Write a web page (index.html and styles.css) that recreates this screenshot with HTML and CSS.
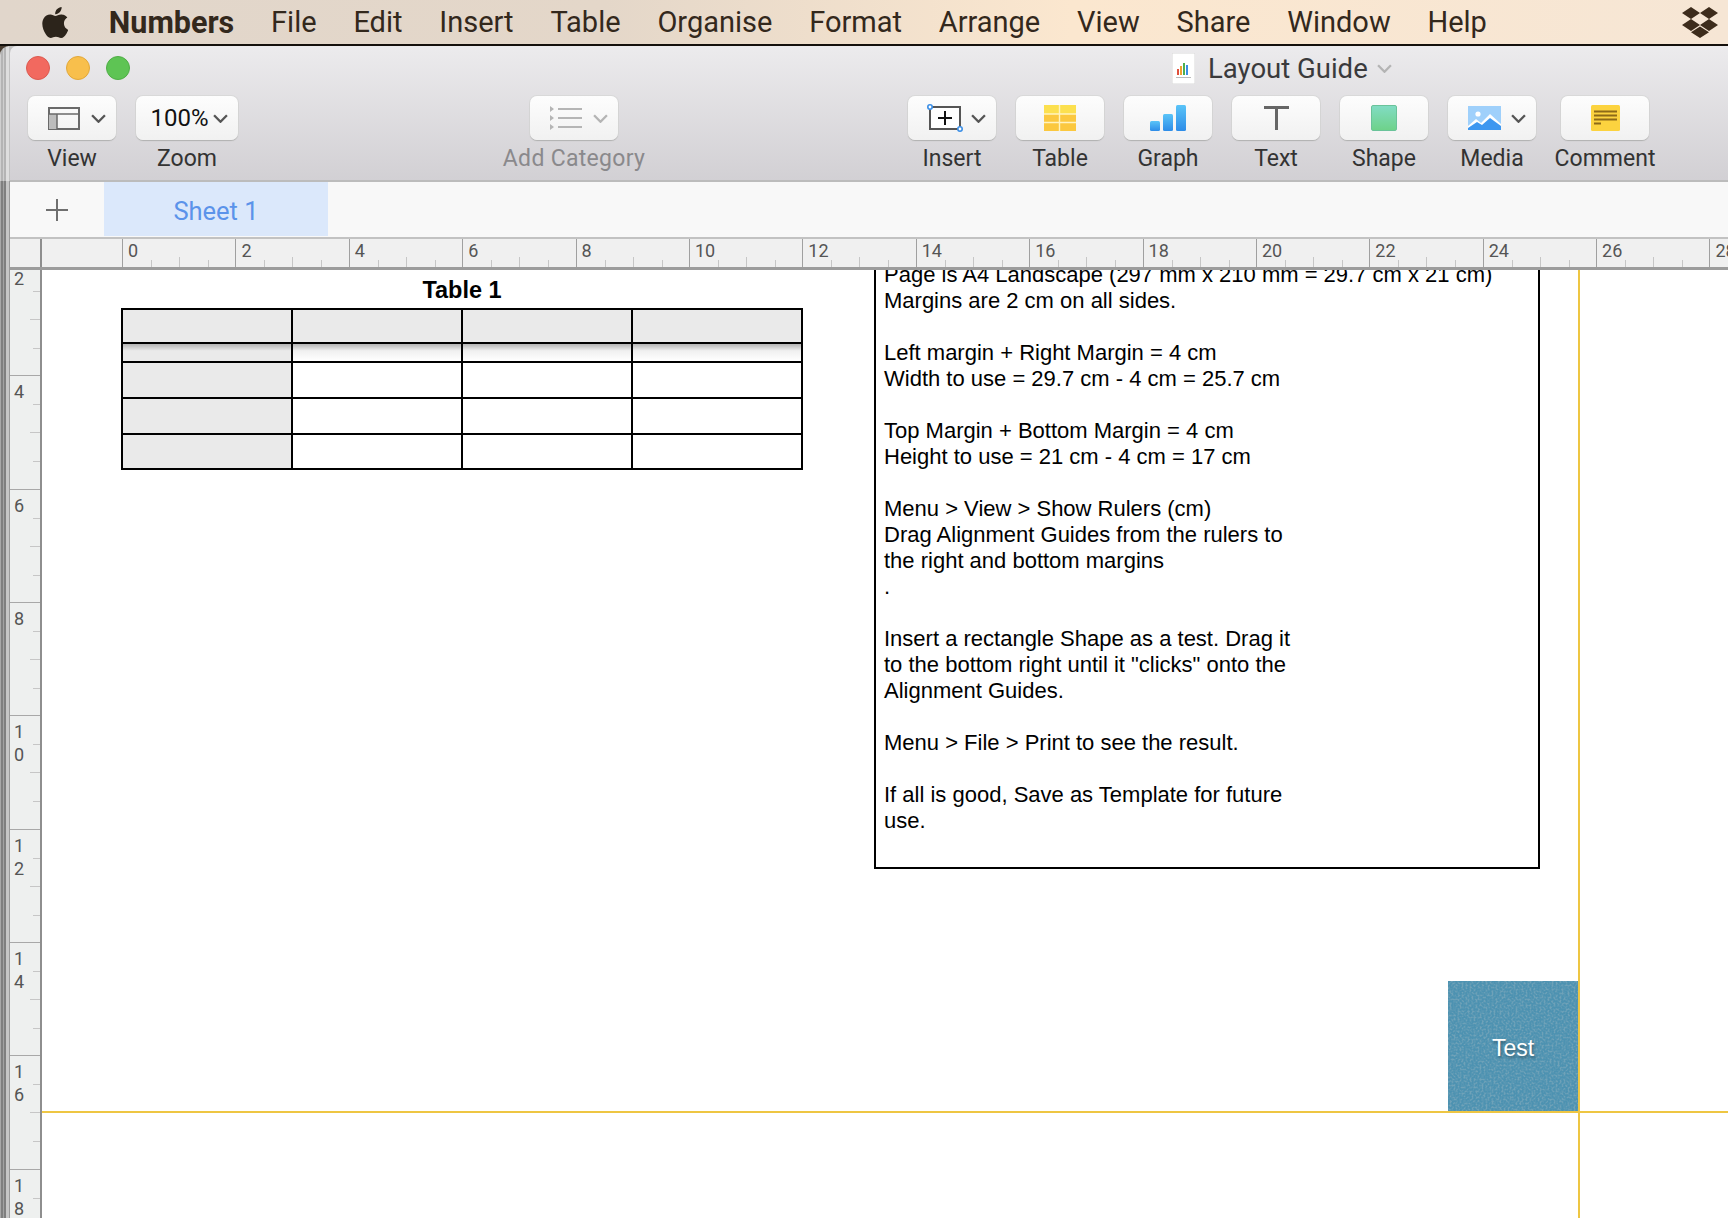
FILE: index.html
```html
<!DOCTYPE html>
<html lang="en">
<head>
    <meta charset="UTF-8">
    <title>Numbers - Layout Guide</title>
    <link rel="stylesheet" href="styles.css">
</head>
<body>

    <!-- Menu Bar -->
    <header class="menubar">
        <svg class="apple-logo" viewBox="2 0 19.6 24" preserveAspectRatio="none"><path d="M12.152 6.896c-.948 0-2.415-1.078-3.96-1.04-2.04.027-3.91 1.183-4.961 3.014-2.117 3.675-.546 9.103 1.519 12.09 1.013 1.454 2.208 3.09 3.792 3.039 1.52-.065 2.09-.987 3.935-.987 1.831 0 2.35.987 3.96.948 1.637-.026 2.676-1.48 3.676-2.948 1.156-1.688 1.636-3.325 1.662-3.415-.039-.013-3.182-1.221-3.22-4.857-.026-3.04 2.48-4.494 2.597-4.559-1.429-2.09-3.623-2.324-4.39-2.376-2-.156-3.675 1.09-4.61 1.09zM15.53 3.83c.843-1.012 1.4-2.427 1.245-3.83-1.207.052-2.662.805-3.532 1.818-.78.896-1.454 2.338-1.273 3.714 1.338.104 2.715-.688 3.559-1.701"/></svg>
        <span class="menu-item app-name">Numbers</span>
        <span class="menu-item">File</span>
        <span class="menu-item">Edit</span>
        <span class="menu-item">Insert</span>
        <span class="menu-item">Table</span>
        <span class="menu-item">Organise</span>
        <span class="menu-item">Format</span>
        <span class="menu-item">Arrange</span>
        <span class="menu-item">View</span>
        <span class="menu-item">Share</span>
        <span class="menu-item">Window</span>
        <span class="menu-item">Help</span>
        <svg class="dropbox-logo" viewBox="0 0 36 31"><path d="M9 0l9 6-9 6-9-6zM27 0l9 6-9 6-9-6zM9 12l9 6-9 6-9-6zM27 12l9 6-9 6-9-6zM18 19.5l9 5.7-9 5.8-9-5.8z"/></svg>
    </header>

    <div class="window">
        <div class="window-edge"></div>
        <div class="window-main">

            <!-- Toolbar -->
            <section class="toolbar">
                <div class="title-row">
                    <span class="light red"></span>
                    <span class="light yellow"></span>
                    <span class="light green"></span>
                    <div class="doc-title">
                        <svg class="doc-icon" viewBox="0 0 23 31">
                            <rect width="23" height="31" fill="#fff" stroke="#d8d8d8"/>
                            <rect x="5" y="16" width="2" height="6" fill="#e0503c"/>
                            <rect x="8" y="13" width="2" height="9" fill="#f0a030"/>
                            <rect x="11" y="10" width="2" height="12" fill="#4caf50"/>
                            <rect x="14" y="12" width="2" height="10" fill="#3a8ee6"/>
                            <rect x="4" y="24" width="15" height="1" fill="#bbb"/>
                        </svg>
                        <span class="doc-name">Layout Guide</span>
                        <svg class="chevron faint-chevron" viewBox="0 0 14 8"><path d="M1 1l6 6 6-6"/></svg>
                    </div>
                </div>
                <div class="tool-row">
                    <div class="tool tool-view">
                        <div class="tool-btn has-menu">
                            <svg class="icon-view" viewBox="0 0 32 23"><rect x="1" y="1" width="30" height="21" fill="none" stroke="#6a6a6a" stroke-width="2"/><rect x="1" y="7" width="8" height="15" fill="#bdbdbd"/><path d="M1 7h30M9 7v15" stroke="#6a6a6a" stroke-width="1.5" fill="none"/></svg>
                            <svg class="chevron" viewBox="0 0 14 8"><path d="M1 1l6 6 6-6"/></svg>
                        </div>
                        <span class="tool-label">View</span>
                    </div>
                    <div class="tool tool-zoom">
                        <div class="tool-btn">
                            <span class="zoom-value">100%</span>
                            <svg class="chevron" viewBox="0 0 14 8"><path d="M1 1l6 6 6-6"/></svg>
                        </div>
                        <span class="tool-label">Zoom</span>
                    </div>
                    <div class="tool tool-category">
                        <div class="tool-btn has-menu">
                            <svg class="icon-list" viewBox="0 0 32 24"><path d="M8 3h24M8 12h24M8 21h24" stroke="#b5b5b5" stroke-width="2"/><path d="M0 0l4 3-4 3zM0 9l4 3-4 3zM0 18l4 3-4 3z" fill="#b5b5b5"/></svg>
                            <svg class="chevron faint-chevron" viewBox="0 0 14 8"><path d="M1 1l6 6 6-6"/></svg>
                        </div>
                        <span class="tool-label">Add Category</span>
                    </div>
                    <div class="tool tool-insert">
                        <div class="tool-btn has-menu">
                            <svg class="icon-insert" viewBox="0 0 36 28"><rect x="3" y="3" width="30" height="22" fill="#fff" stroke="#555" stroke-width="2"/><path d="M18 7v14M11 14h14" stroke="#111" stroke-width="2"/><circle cx="3" cy="3" r="2.2" fill="#fff" stroke="#3a8ee6" stroke-width="1.6"/><circle cx="33" cy="25" r="2.2" fill="#fff" stroke="#3a8ee6" stroke-width="1.6"/></svg>
                            <svg class="chevron" viewBox="0 0 14 8"><path d="M1 1l6 6 6-6"/></svg>
                        </div>
                        <span class="tool-label">Insert</span>
                    </div>
                    <div class="tool">
                        <div class="tool-btn">
                            <svg class="icon-table" viewBox="0 0 32 26"><rect width="32" height="9" fill="#fce04f"/><rect y="9" width="32" height="17" fill="#fbc83f"/><path d="M15.5 0v26M0 9h32M0 17.5h32" stroke="#fff3c0" stroke-width="1.4"/></svg>
                        </div>
                        <span class="tool-label">Table</span>
                    </div>
                    <div class="tool">
                        <div class="tool-btn">
                            <svg class="icon-graph" viewBox="0 0 36 26">
                                <defs><linearGradient id="bar" x1="0" y1="0" x2="0" y2="1"><stop offset="0" stop-color="#5ac4f8"/><stop offset="1" stop-color="#2d8ce8"/></linearGradient></defs>
                                <rect x="0" y="16" width="10" height="10" rx="1.5" fill="url(#bar)"/>
                                <rect x="13" y="9" width="10" height="17" rx="1.5" fill="url(#bar)"/>
                                <rect x="26" y="0" width="10" height="26" rx="1.5" fill="url(#bar)"/>
                            </svg>
                        </div>
                        <span class="tool-label">Graph</span>
                    </div>
                    <div class="tool">
                        <div class="tool-btn">
                            <svg class="icon-text" viewBox="0 0 25 24"><path d="M0 1.5h25M12.5 1.5V24" stroke="#666" stroke-width="3" fill="none"/></svg>
                        </div>
                        <span class="tool-label">Text</span>
                    </div>
                    <div class="tool">
                        <div class="tool-btn">
                            <span class="icon-shape"></span>
                        </div>
                        <span class="tool-label">Shape</span>
                    </div>
                    <div class="tool tool-media">
                        <div class="tool-btn has-menu">
                            <svg class="icon-media" viewBox="0 0 33 24"><rect width="33" height="24" fill="#9fd0fb"/><circle cx="10" cy="8" r="2.6" fill="#fff"/><path d="M0 20l8-7 5 4 9-9 11 10v6H0z" fill="#fff"/><path d="M0 22l9-6 5 3 8-7 11 8v4H0z" fill="#3d97f0"/></svg>
                            <svg class="chevron" viewBox="0 0 14 8"><path d="M1 1l6 6 6-6"/></svg>
                        </div>
                        <span class="tool-label">Media</span>
                    </div>
                    <div class="tool tool-comment">
                        <div class="tool-btn">
                            <svg class="icon-comment" viewBox="0 0 29 26"><rect width="29" height="26" rx="1.5" fill="#fcd33f"/><path d="M3 6.5h23M3 10.500h23M3 14.500h23M3 18.500h7" stroke="#8d6a18" stroke-width="1.8"/></svg>
                        </div>
                        <span class="tool-label">Comment</span>
                    </div>
                </div>
            </section>

            <!-- Sheet Tabs -->
            <nav class="tabbar">
                <svg class="add-sheet" viewBox="0 0 22 22"><path d="M11 0v22M0 11h22" stroke="#6f6f6f" stroke-width="2"/></svg>
                <div class="sheet-tab">Sheet 1</div>
            </nav>

            <!-- Top Ruler -->
            <div class="ruler-top">
                <div class="ruler-corner"></div>
                <div class="ruler-lead"></div>
                <div class="h-cell"><span>0</span></div>
                <div class="h-cell"><span>2</span></div>
                <div class="h-cell"><span>4</span></div>
                <div class="h-cell"><span>6</span></div>
                <div class="h-cell"><span>8</span></div>
                <div class="h-cell"><span>10</span></div>
                <div class="h-cell"><span>12</span></div>
                <div class="h-cell"><span>14</span></div>
                <div class="h-cell"><span>16</span></div>
                <div class="h-cell"><span>18</span></div>
                <div class="h-cell"><span>20</span></div>
                <div class="h-cell"><span>22</span></div>
                <div class="h-cell"><span>24</span></div>
                <div class="h-cell"><span>26</span></div>
                <div class="h-cell"><span>28</span></div>
            </div>

            <div class="work-area">
                <!-- Side Ruler -->
                <div class="ruler-side">
                    <div class="v-cell">2</div>
                    <div class="v-cell">4</div>
                    <div class="v-cell">6</div>
                    <div class="v-cell">8</div>
                    <div class="v-cell">1<br>0</div>
                    <div class="v-cell">1<br>2</div>
                    <div class="v-cell">1<br>4</div>
                    <div class="v-cell">1<br>6</div>
                    <div class="v-cell">1<br>8</div>
                </div>

                <!-- Sheet Canvas -->
                <main class="canvas">
                    <div class="table-block">
                        <div class="table-title">Table 1</div>
                        <table class="sheet-table">
                            <tr class="row-header"><td></td><td></td><td></td><td></td></tr>
                            <tr class="row-shadow"><td></td><td></td><td></td><td></td></tr>
                            <tr class="row-body"><td></td><td></td><td></td><td></td></tr>
                            <tr class="row-body"><td></td><td></td><td></td><td></td></tr>
                            <tr class="row-body"><td></td><td></td><td></td><td></td></tr>
                        </table>
                    </div>

                    <div class="note-box">
                        Page is A4 Landscape (297 mm x 210 mm = 29.7 cm x 21 cm)<br>
                        Margins are 2 cm on all sides.<br>
                        <br>
                        Left margin + Right Margin = 4 cm<br>
                        Width to use = 29.7 cm - 4 cm = 25.7 cm<br>
                        <br>
                        Top Margin + Bottom Margin = 4 cm<br>
                        Height to use = 21 cm - 4 cm = 17 cm<br>
                        <br>
                        Menu &gt; View &gt; Show Rulers (cm)<br>
                        Drag Alignment Guides from the rulers to<br>
                        the right and bottom margins<br>
                        .<br>
                        <br>
                        Insert a rectangle Shape as a test. Drag it<br>
                        to the bottom right until it "clicks" onto the<br>
                        Alignment Guides.<br>
                        <br>
                        Menu &gt; File &gt; Print to see the result.<br>
                        <br>
                        If all is good, Save as Template for future<br>
                        use.
                    </div>

                    <div class="test-shape">
                        <svg class="grain" width="130" height="130">
                            <filter id="grain-noise"><feTurbulence type="fractalNoise" baseFrequency="0.5" numOctaves="3" seed="4"/><feColorMatrix values="0 0 0 0 0.16  0 0 0 0 0.36  0 0 0 0 0.48  0 0 0 3.4 -1.45"/></filter>
                            <rect width="130" height="130" filter="url(#grain-noise)"/>
                        </svg>
                        <span class="test-label">Test</span>
                    </div>

                    <div class="guide guide-v"></div>
                    <div class="guide guide-h"></div>
                </main>
            </div>
        </div>
    </div>
</body>
</html>
```

FILE: styles.css
```css
/* Page */
* {
    box-sizing: border-box;
}

html, body {
    margin: 0;
    height: 100%;
}

body {
    width: 1728px;
    height: 1218px;
    overflow: hidden;
    display: flex;
    flex-direction: column;
    background: #fff;
    font-family: Roboto, "Liberation Sans", sans-serif;
}

/* Menu Bar */
.menubar {
    flex: none;
    position: relative;
    height: 46px;
    display: flex;
    align-items: center;
    gap: 36.8px;
    padding: 0 0 0 42px;
    border-bottom: 2px solid #14100c;
    background: linear-gradient(90deg, #e1d6cb 0%, #e4d7c9 35%, #fbe7cf 62%, #f6e6d5 100%);
}

.apple-logo {
    width: 26px;
    height: 31px;
    margin-right: 4px;
    fill: #2c241b;
}

.menu-item {
    font-size: 29px;
    color: #33281c;
    white-space: nowrap;
}

.app-name {
    font-size: 30.500px;
    font-weight: 700;
}

.dropbox-logo {
    position: absolute;
    left: 1682px;
    top: 7px;
    width: 36px;
    height: 31px;
    fill: #3d2c1c;
}

/* Window */
.window {
    flex: 1;
    min-height: 0;
    display: flex;
    background: #4a3d30;
}

/* other windows stacked behind this one */
.window-edge {
    flex: none;
    width: 10px;
    border-top-left-radius: 9px;
    background:
        linear-gradient(90deg, #d0d0d0 0 1px, #b4b4b4 1px 3px, #cfcfcf 3px 4px, #b4b4b4 4px 6px, #dedede 6px 9px, #c2c2c2 9px) 0 0 / 100% 135px no-repeat,
        linear-gradient(90deg, #a8a8a8 0 1px, #7f7f7f 1px 3px, #a2a2a2 3px 4px, #7f7f7f 4px 6px, #c6c6c6 6px 9px, #9a9a9a 9px);
}

.window-main {
    flex: 1;
    min-width: 0;
    display: flex;
    flex-direction: column;
    background: #c2c2c2;
}

/* Toolbar */
.toolbar {
    flex: none;
    height: 136px;
    border-top-left-radius: 7px;
    border-bottom: 2px solid #bcbcbc;
    background: linear-gradient(#ecebed, #d2d0d4);
}

.title-row {
    height: 50px;
    display: flex;
    align-items: center;
    gap: 16px;
    padding: 0 0 6px 16px;
}

.light {
    width: 24px;
    height: 24px;
    border-radius: 50%;
}

.light.red {
    background: #f2695f;
    border: 1px solid #dc5a50;
}

.light.yellow {
    background: #f8bf4c;
    border: 1px solid #e2a83a;
}

.light.green {
    background: #5ec454;
    border: 1px solid #4fae46;
}

.doc-title {
    display: flex;
    align-items: center;
    margin-left: 1026px;
}

.doc-icon {
    width: 23px;
    height: 31px;
    margin-right: 13px;
}

.doc-name {
    font-size: 27.500px;
    color: #3a3a3c;
    margin-right: 9px;
}

.tool-row {
    display: flex;
    padding-left: 18px;
}

.tool {
    flex: none;
    width: 88px;
    margin-right: 20px;
    display: flex;
    flex-direction: column;
    align-items: center;
}

.tool-zoom {
    width: 102px;
    margin-right: 292px;
}

.tool-category {
    margin-right: 290px;
}

.tool-media {
    margin-right: 25px;
}

.tool-btn {
    width: 100%;
    height: 44px;
    display: flex;
    align-items: center;
    justify-content: center;
    border-radius: 7px;
    background: linear-gradient(#fdfdfd, #f1f1f1);
    box-shadow: 0 1px 1px #b0b0b0, 0 0 0 1px #d9d9d9;
}

.tool-btn.has-menu {
    padding-left: 9px;
}

.tool-zoom .tool-btn {
    padding-left: 4px;
}

.tool-label {
    margin-top: 5px;
    font-size: 23px;
    line-height: 27px;
    color: #333;
    white-space: nowrap;
}

.tool-category .tool-label {
    color: #8a898c;
    letter-spacing: 0.3px;
}

.chevron {
    flex: none;
    width: 15px;
    height: 9px;
    fill: none;
    stroke: #555;
    stroke-width: 2.2;
}

.faint-chevron {
    stroke: #b4b4b4;
}

.icon-view {
    width: 32px;
    height: 23px;
    margin-right: 11px;
}

.zoom-value {
    font-size: 24px;
    color: #111;
    margin-right: 4px;
}

.icon-list {
    width: 32px;
    height: 24px;
    margin-right: 11px;
}

.icon-insert {
    width: 36px;
    height: 28px;
    margin-right: 8px;
}

.icon-table {
    width: 32px;
    height: 26px;
}

.icon-graph {
    width: 36px;
    height: 26px;
}

.icon-text {
    width: 25px;
    height: 24px;
}

.icon-shape {
    width: 26px;
    height: 26px;
    border-radius: 2px;
    background: linear-gradient(#81dcc3, #6ed28a);
    border: 1px solid #6ac39a;
}

.icon-media {
    width: 33px;
    height: 24px;
    margin-right: 10px;
}

.icon-comment {
    width: 29px;
    height: 26px;
}

/* Sheet Tabs */
.tabbar {
    flex: none;
    height: 55px;
    display: flex;
    align-items: stretch;
    background: #f8f8f8;
}

.add-sheet {
    width: 22px;
    height: 22px;
    margin: 17px 36px 0 36px;
}

.sheet-tab {
    width: 224px;
    margin-bottom: 1px;
    padding-top: 3px;
    display: flex;
    align-items: center;
    justify-content: center;
    background: #dbe8fb;
    color: #5b93ea;
    font-size: 25.500px;
}

/* Rulers */
.ruler-top {
    flex: none;
    height: 33px;
    display: flex;
    overflow: hidden;
    border-top: 2px solid #c2c2c2;
    border-bottom: 3px solid #9c9c9c;
    background: #f0f0f0;
}

.ruler-corner {
    flex: none;
    width: 32px;
    border-right: 2px solid #8e8e8e;
}

.ruler-lead {
    flex: none;
    width: 80px;
}

.h-cell {
    flex: none;
    width: 113.4px;
    padding-left: 5px;
    border-left: 1px solid #a0a0a0;
    font-size: 18px;
    line-height: 24px;
    color: #555;
    background-image:
        linear-gradient(#c6c6c6, #c6c6c6),
        linear-gradient(#c6c6c6, #c6c6c6),
        linear-gradient(#c6c6c6, #c6c6c6);
    background-repeat: no-repeat;
    background-size: 1px 7px, 1px 10px, 1px 7px;
    background-position: 28px 100%, 56px 100%, 85px 100%;
}

.work-area {
    flex: 1;
    min-height: 0;
    display: flex;
}

.ruler-side {
    flex: none;
    width: 32px;
    overflow: hidden;
    border-right: 2px solid #8e8e8e;
    background: #eef0ef;
}

.v-cell {
    height: 113.33px;
    padding: 4px 0 0 4px;
    border-top: 1px solid #a8a8a8;
    font-size: 18px;
    line-height: 23px;
    color: #555;
    background-image:
        linear-gradient(#c6c6c6, #c6c6c6),
        linear-gradient(#c6c6c6, #c6c6c6),
        linear-gradient(#c6c6c6, #c6c6c6);
    background-repeat: no-repeat;
    background-size: 7px 1px, 10px 1px, 7px 1px;
    background-position: 100% 28px, 100% 56px, 100% 85px;
}

.v-cell:first-child {
    margin-top: -8px;
}

/* Sheet Canvas */
.canvas {
    flex: 1;
    min-width: 0;
    position: relative;
    overflow: hidden;
    background: #fff;
}

.table-block {
    position: absolute;
    left: 79px;
    top: 7px;
    width: 682px;
}

.table-title {
    height: 31px;
    line-height: 26px;
    text-align: center;
    font-family: "Liberation Sans", sans-serif;
    font-size: 23.500px;
    font-weight: 700;
    color: #000;
}

.sheet-table {
    width: 100%;
    table-layout: fixed;
    border-collapse: collapse;
    border: 2px solid #000;
}

.sheet-table td {
    padding: 0;
    border: 2px solid #000;
}

.sheet-table td:first-child {
    background: #eaeaea;
}

.sheet-table .row-header td {
    height: 34px;
    background: #eaeaea;
}

.sheet-table .row-shadow td {
    height: 19px;
    background: linear-gradient(#b4b4b4, #f0f0f0 40%, #ffffff);
}

.sheet-table .row-shadow td:first-child {
    background: linear-gradient(#b4b4b4, #eaeaea 40%);
}

.sheet-table .row-body td {
    height: 36px;
}

.sheet-table .row-body:last-child td {
    height: 35px;
}

.note-box {
    position: absolute;
    left: 832px;
    top: -20px;
    width: 666px;
    height: 619px;
    padding: 10px 0 0 8px;
    border: 2px solid #000;
    font-family: "Liberation Sans", sans-serif;
    font-size: 22px;
    line-height: 26px;
    color: #000;
    white-space: nowrap;
}

.test-shape {
    position: absolute;
    left: 1406px;
    top: 711px;
    width: 130px;
    height: 130px;
    padding-top: 4px;
    display: flex;
    align-items: center;
    justify-content: center;
    background: #4d92b1;
}

.grain {
    position: absolute;
    left: 0;
    top: 0;
}

.test-label {
    position: relative;
    font-family: "Liberation Sans", sans-serif;
    font-size: 23px;
    color: #fff;
    text-shadow: 1px 2px 3px rgba(0, 0, 0, 0.4);
}

.guide {
    position: absolute;
    background: #eec643;
}

.guide-v {
    left: 1536px;
    top: 0;
    bottom: 0;
    width: 2px;
}

.guide-h {
    left: 0;
    right: 0;
    top: 841px;
    height: 2px;
}
```
